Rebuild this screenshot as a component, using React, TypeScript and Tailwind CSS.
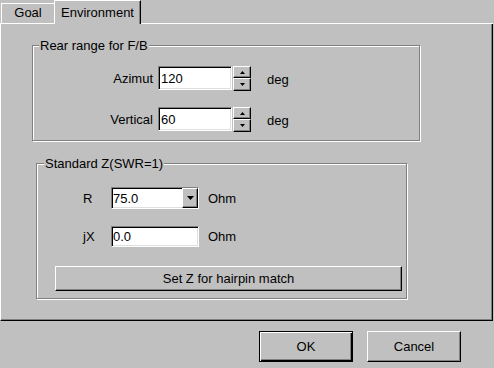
import React from "react";

const sunken =
  "border border-t-[#808080] border-l-[#808080] border-b-white border-r-white shadow-[inset_1px_1px_0_#000,inset_-1px_-1px_0_#dfdfdf]";
const raised =
  "border border-t-white border-l-white border-b-black border-r-black shadow-[inset_-1px_-1px_0_#808080]";
const etched = "border border-[#808080] shadow-[inset_1px_1px_0_#fff,1px_1px_0_#fff]";

function Arrow({ up }: { up?: boolean }) {
  return (
    <svg width="5" height="3" viewBox="0 0 5 3" className="block">
      {up ? <path d="M2.5 0 L5 3 L0 3 Z" fill="#000" /> : <path d="M0 0 L5 0 L2.5 3 Z" fill="#000" />}
    </svg>
  );
}

function Spinner() {
  return (
    <div className="ml-[1px] flex w-[18px] h-[25px] flex-col">
      <div className={`${raised} flex h-[12px] items-center justify-center bg-[#c0c0c0]`}>
        <Arrow up />
      </div>
      <div className={`${raised} flex h-[13px] items-center justify-center bg-[#c0c0c0]`}>
        <Arrow />
      </div>
    </div>
  );
}

function SpinRow({ label, value, className = "" }: { label: string; value: string; className?: string }) {
  return (
    <div className={`flex items-start h-[25px] ${className}`}>
      <div className="w-[120px] mr-[5px] h-[24px] flex items-center justify-end">{label}</div>
      <div className={`${sunken} w-[74px] h-[24px] bg-white pl-[2px] flex items-center`}>{value}</div>
      <Spinner />
      <div className="ml-[16px] h-[25px] flex items-center pt-[2px]">deg</div>
    </div>
  );
}

export default function App() {
  return (
    <div
      className="w-[494px] h-[368px] bg-[#c0c0c0] text-black text-[13px] leading-[15px] overflow-hidden"
      style={{ fontFamily: '"Liberation Sans", Arial, sans-serif' }}
    >
      {/* tab strip */}
      <div className="flex h-[24px] w-[493px]">
        <div className="w-[1px] border-b border-white" />
        <div className="flex flex-col border-b border-white">
          <div className="mt-[3px] flex-1 w-[53px] border-l border-t border-white flex items-center justify-center pb-[2px]">
            Goal
          </div>
        </div>
        <div className="h-[24px] w-[87px] border-l border-t border-white border-r border-r-black shadow-[inset_-1px_0_0_#808080] flex items-center justify-center pb-[1px]">
          Environment
        </div>
        <div className="flex-1 border-b border-white" />
      </div>

      {/* panel */}
      <div className="w-[493px] h-[297px] border-l border-l-white border-r border-r-black border-b border-b-black shadow-[inset_-1px_-1px_0_#808080] flex flex-col">
        <div className={`${etched} relative ml-[31px] mt-[21px] w-[388px] h-[96px] pt-[20px]`}>
          <div className="absolute -top-[8px] left-[6px] px-[1px] bg-[#c0c0c0]">Rear range for F/B</div>
          <SpinRow label="Azimut" value="120" />
          <SpinRow label="Vertical" value="60" className="mt-[16px]" />
        </div>

        <div className={`${etched} relative ml-[35px] mt-[22px] w-[371px] h-[136px] pt-[23px]`}>
          <div className="absolute -top-[8px] left-[7px] px-[1px] bg-[#c0c0c0]">Standard Z(SWR=1)</div>
          <div className="pl-[46px]">
            <div className="flex items-center h-[22px]">
              <div className="w-[28px]">R</div>
              <div className={`${sunken} w-[88px] h-[22px] bg-white flex items-center`}>
                <div className="flex-1 pl-[1px]">75.0</div>
                <div className={`${raised} w-[16px] h-full bg-[#c0c0c0] flex items-center justify-center`}>
                  <svg width="7" height="4" viewBox="0 0 7 4" className="block">
                    <path d="M0 0 L7 0 L3.5 4 Z" fill="#000" />
                  </svg>
                </div>
              </div>
              <div className="ml-[9px]">Ohm</div>
            </div>
            <div className="flex items-center h-[21px] mt-[17px]">
              <div className="w-[28px]">jX</div>
              <div className={`${sunken} w-[88px] h-[21px] bg-white pl-[1px] flex items-center`}>0.0</div>
              <div className="ml-[9px]">Ohm</div>
            </div>
          </div>
          <div
            className={`${raised} ml-[18px] mt-[19px] w-[347px] h-[25px] bg-[#c0c0c0] flex items-center justify-center`}
          >
            Set Z for hairpin match
          </div>
        </div>
      </div>

      {/* bottom buttons */}
      <div className="flex justify-end pr-[33px] mt-[10px] gap-[14px]">
        <div className="w-[94px] h-[31px] border border-black shadow-[inset_1px_1px_0_#fff,inset_-1px_-1px_0_#000,inset_-2px_-2px_0_#808080] flex items-center justify-center">
          OK
        </div>
        <div className={`${raised} w-[94px] h-[31px] flex items-center justify-center`}>Cancel</div>
      </div>
    </div>
  );
}
